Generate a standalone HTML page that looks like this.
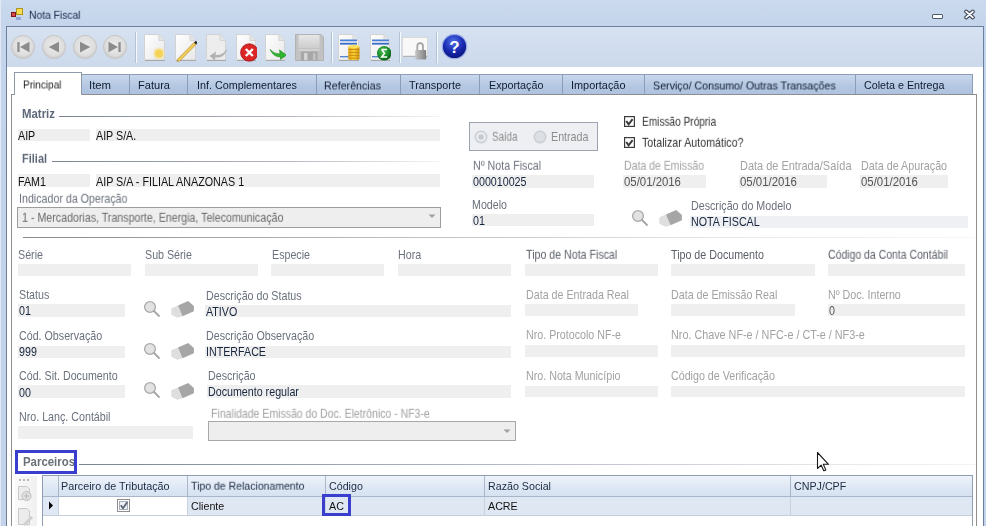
<!DOCTYPE html>
<html><head><meta charset="utf-8"><style>
html,body{margin:0;padding:0;}
body{width:986px;height:526px;overflow:hidden;position:relative;font-family:"Liberation Sans",sans-serif;}
.r{position:absolute;}
.t{position:absolute;white-space:nowrap;line-height:13px;will-change:transform;}
</style></head><body>
<div class="r" style="left:0px;top:0px;width:986.00px;height:526.00px;background:linear-gradient(#cbdaee,#c4d4ea 26px,#c2d3ea);"></div>
<div class="r" style="left:0px;top:0px;width:1.00px;height:526.00px;background:#e0e9f5;"></div>
<div class="r" style="left:16px;top:8px;width:7.00px;height:7.00px;background:#f6dc50;border:1px solid #b0951e;box-sizing:border-box;"></div>
<div class="r" style="left:11px;top:12px;width:5.00px;height:5.00px;background:#d94a4a;border:1px solid #7d1818;box-sizing:border-box;"></div>
<div class="r" style="left:16px;top:17px;width:5.00px;height:3.00px;background:#90a8d6;"></div>
<div class="t" style="left:29px;top:9.29px;font-size:10.7px;color:#15284b;transform-origin:0 10.21px;transform:scale(0.9642,1.02);">Nota Fiscal</div>
<div class="r" style="left:932px;top:14px;width:11.00px;height:5.00px;background:#fff;border:1px solid #4d5b70;border-radius:1px;box-sizing:border-box;"></div>
<svg class="r" style="left:963px;top:9px" width="13" height="11" viewBox="0 0 13 11"><path d="M3.2 2.6 L9.8 8.4 M9.8 2.6 L3.2 8.4" stroke="#3e4858" stroke-width="4" stroke-linecap="round"/><path d="M3.2 2.6 L9.8 8.4 M9.8 2.6 L3.2 8.4" stroke="#fff" stroke-width="1.9" stroke-linecap="round"/></svg>
<div class="r" style="left:6px;top:26px;width:978.00px;height:500.00px;background:#fff;border:1px solid #6c809e;border-bottom:none;box-sizing:border-box;"></div>
<div class="r" style="left:7px;top:27px;width:976.00px;height:40.00px;background:linear-gradient(#d6e2f1,#ccd9ec);"></div>
<svg class="r" style="left:9.7px;top:34px" width="26" height="26" viewBox="0 0 26 26"><defs><radialGradient id="g22" cx="50%" cy="45%" r="55%"><stop offset="0" stop-color="#ececec"/><stop offset="0.75" stop-color="#dedede"/><stop offset="1" stop-color="#c6c6c6"/></radialGradient></defs><circle cx="13" cy="13" r="11.6" fill="url(#g22)" stroke="#c8c8c8" stroke-width="1"/><rect x="7.3" y="8.2" width="2.3" height="9.8" fill="#8c8c8c"/><path d="M10 13 L19.5 7.8 L19.5 18.2Z" fill="#8c8c8c"/></svg>
<svg class="r" style="left:40.6px;top:34px" width="26" height="26" viewBox="0 0 26 26"><defs><radialGradient id="g53" cx="50%" cy="45%" r="55%"><stop offset="0" stop-color="#ececec"/><stop offset="0.75" stop-color="#dedede"/><stop offset="1" stop-color="#c6c6c6"/></radialGradient></defs><circle cx="13" cy="13" r="11.6" fill="url(#g53)" stroke="#c8c8c8" stroke-width="1"/><path d="M7.7 13 L18 7.7 L18 18.4Z" fill="#8c8c8c"/></svg>
<svg class="r" style="left:71.5px;top:34px" width="26" height="26" viewBox="0 0 26 26"><defs><radialGradient id="g84" cx="50%" cy="45%" r="55%"><stop offset="0" stop-color="#ececec"/><stop offset="0.75" stop-color="#dedede"/><stop offset="1" stop-color="#c6c6c6"/></radialGradient></defs><circle cx="13" cy="13" r="11.6" fill="url(#g84)" stroke="#c8c8c8" stroke-width="1"/><path d="M18.3 13 L8 7.7 L8 18.4Z" fill="#8c8c8c"/></svg>
<svg class="r" style="left:102.4px;top:34px" width="26" height="26" viewBox="0 0 26 26"><defs><radialGradient id="g115" cx="50%" cy="45%" r="55%"><stop offset="0" stop-color="#ececec"/><stop offset="0.75" stop-color="#dedede"/><stop offset="1" stop-color="#c6c6c6"/></radialGradient></defs><circle cx="13" cy="13" r="11.6" fill="url(#g115)" stroke="#c8c8c8" stroke-width="1"/><rect x="16.4" y="8.2" width="2.3" height="9.8" fill="#8c8c8c"/><path d="M16 13 L6.5 7.8 L6.5 18.2Z" fill="#8c8c8c"/></svg>
<div class="r" style="left:135px;top:32px;width:1.00px;height:31.00px;background:#b4c2d6;"></div>
<div class="r" style="left:136px;top:32px;width:1.00px;height:31.00px;background:#f6f9fd;"></div>
<div class="r" style="left:331px;top:32px;width:1.00px;height:31.00px;background:#b4c2d6;"></div>
<div class="r" style="left:332px;top:32px;width:1.00px;height:31.00px;background:#f6f9fd;"></div>
<div class="r" style="left:398.5px;top:32px;width:1.00px;height:31.00px;background:#b4c2d6;"></div>
<div class="r" style="left:399.5px;top:32px;width:1.00px;height:31.00px;background:#f6f9fd;"></div>
<div class="r" style="left:436px;top:32px;width:1.00px;height:31.00px;background:#b4c2d6;"></div>
<div class="r" style="left:437px;top:32px;width:1.00px;height:31.00px;background:#f6f9fd;"></div>
<svg class="r" style="left:144px;top:34px" width="22" height="28" viewBox="0 0 22 28"><defs><linearGradient id="pg" x1="0" y1="0" x2="1" y2="1"><stop offset="0" stop-color="#ffffff"/><stop offset="1" stop-color="#e8e8e8"/></linearGradient></defs><path d="M0.5 0.5 H15 L20.5 6.5 V26 H0.5Z" fill="url(#pg)" stroke="#d2d2d2"/><path d="M15 0.5 V6.5 H20.5" fill="#e4e4e4" stroke="#d4d4d4"/><path d="M1 26.5 H21" stroke="#a9a9a9"/><circle cx="15" cy="19.5" r="6" fill="#f8e08a" opacity="0.6"/><circle cx="15" cy="19.5" r="4" fill="#f4d458"/></svg>
<svg class="r" style="left:175px;top:34px" width="22" height="28" viewBox="0 0 22 28"><defs><linearGradient id="pg" x1="0" y1="0" x2="1" y2="1"><stop offset="0" stop-color="#ffffff"/><stop offset="1" stop-color="#e8e8e8"/></linearGradient></defs><path d="M0.5 0.5 H15 L20.5 6.5 V26 H0.5Z" fill="url(#pg)" stroke="#d2d2d2"/><path d="M15 0.5 V6.5 H20.5" fill="#e4e4e4" stroke="#d4d4d4"/><path d="M1 26.5 H21" stroke="#a9a9a9"/><path d="M2.8 25 L19 8.5 L21 10.5 L4.8 27 L2.3 27.5Z" fill="#f2cc5a" stroke="#b08420" stroke-width="0.6"/><path d="M19 8.5 L20.8 6.7 L22.8 8.7 L21 10.5Z" fill="#2a2a2a"/></svg>
<svg class="r" style="left:206px;top:34px" width="21" height="28" viewBox="0 0 21 28"><defs><linearGradient id="pg" x1="0" y1="0" x2="1" y2="1"><stop offset="0" stop-color="#ffffff"/><stop offset="1" stop-color="#e8e8e8"/></linearGradient></defs><path d="M0.5 0.5 H14 L19.5 6.5 V26 H0.5Z" fill="#ededed" stroke="#d2d2d2"/><path d="M14 0.5 V6.5 H19.5" fill="#e4e4e4" stroke="#d4d4d4"/><path d="M1 26.5 H20" stroke="#a9a9a9"/><path d="M20.5 15 Q17 21.5 9.5 21 L10 17.5 L3.5 22 L9 26.5 L9.3 23.5 Q18 24.5 21 16Z" fill="#b2b2b2"/></svg>
<svg class="r" style="left:235.5px;top:34px" width="21" height="28" viewBox="0 0 21 28"><defs><linearGradient id="pg" x1="0" y1="0" x2="1" y2="1"><stop offset="0" stop-color="#ffffff"/><stop offset="1" stop-color="#e8e8e8"/></linearGradient></defs><path d="M0.5 0.5 H14 L19.5 6.5 V26 H0.5Z" fill="url(#pg)" stroke="#d2d2d2"/><path d="M14 0.5 V6.5 H19.5" fill="#e4e4e4" stroke="#d4d4d4"/><path d="M1 26.5 H20" stroke="#a9a9a9"/><circle cx="13.3" cy="18.5" r="8.7" fill="#dc2626" stroke="#a01414" stroke-width="0.8"/><path d="M9.8 15 L16.8 22 M16.8 15 L9.8 22" stroke="#fff" stroke-width="2.4"/></svg>
<svg class="r" style="left:265px;top:34px" width="21" height="28" viewBox="0 0 21 28"><defs><linearGradient id="pg" x1="0" y1="0" x2="1" y2="1"><stop offset="0" stop-color="#ffffff"/><stop offset="1" stop-color="#e8e8e8"/></linearGradient></defs><path d="M0.5 0.5 H14 L19.5 6.5 V26 H0.5Z" fill="url(#pg)" stroke="#d2d2d2"/><path d="M14 0.5 V6.5 H19.5" fill="#e4e4e4" stroke="#d4d4d4"/><path d="M1 26.5 H20" stroke="#a9a9a9"/><path d="M5 15.5 Q9 20 15 20 L14.5 16 L21.5 21 L15.5 25.5 L15.5 23 Q8.5 23 5 15.5Z" fill="#2fb52f" stroke="#1c8a1c" stroke-width="0.6"/></svg>
<svg class="r" style="left:295px;top:33.5px" width="29" height="27" viewBox="0 0 29 27"><defs><linearGradient id="fl" x1="0" y1="0" x2="0" y2="1"><stop offset="0" stop-color="#e6e6e6"/><stop offset="1" stop-color="#cdcdcd"/></linearGradient></defs><path d="M0.5 0.5 H26 L28.5 3 V26.5 H0.5Z" fill="#c2c2c2" stroke="#b2b2b2"/><rect x="3.5" y="1" width="21" height="13" fill="url(#fl)"/><rect x="3.5" y="15.5" width="21" height="1" fill="#e0e0e0"/><rect x="6" y="17.5" width="16.5" height="9" fill="#a6a6a6"/><rect x="9" y="19" width="3.5" height="7" fill="#d4d4d4"/><rect x="18" y="19" width="2.5" height="7" fill="#c4c4c4"/></svg>
<svg class="r" style="left:338px;top:34px" width="22" height="28" viewBox="0 0 22 28"><defs><linearGradient id="pg" x1="0" y1="0" x2="1" y2="1"><stop offset="0" stop-color="#ffffff"/><stop offset="1" stop-color="#e8e8e8"/></linearGradient></defs><path d="M0.5 0.5 H15 L20.5 6.5 V26 H0.5Z" fill="url(#pg)" stroke="#d2d2d2"/><path d="M15 0.5 V6.5 H20.5" fill="#e4e4e4" stroke="#d4d4d4"/><path d="M1 26.5 H21" stroke="#a9a9a9"/><defs><linearGradient id="cn" x1="0" y1="0" x2="1" y2="0"><stop offset="0" stop-color="#e0a010"/><stop offset="0.5" stop-color="#f8d030"/><stop offset="1" stop-color="#d09010"/></linearGradient></defs><rect x="2" y="5.5" width="17" height="1.8" fill="#4a80d8"/><rect x="2" y="8.8" width="17" height="1.8" fill="#3a6ac8"/><rect x="2" y="22" width="9" height="1.4" fill="#5a88d0"/><rect x="10.3" y="12" width="11.2" height="14" rx="2" fill="url(#cn)"/><path d="M10.5 15.5 H21.3 M10.5 18.5 H21.3 M10.5 21.5 H21.3 M10.5 24.2 H21.3" stroke="#c08010" stroke-width="0.7"/><ellipse cx="15.9" cy="12.5" rx="5.6" ry="1.8" fill="#fae060"/></svg>
<svg class="r" style="left:369.9px;top:34px" width="21" height="28" viewBox="0 0 21 28"><defs><linearGradient id="pg" x1="0" y1="0" x2="1" y2="1"><stop offset="0" stop-color="#ffffff"/><stop offset="1" stop-color="#e8e8e8"/></linearGradient></defs><path d="M0.5 0.5 H14 L19.5 6.5 V26 H0.5Z" fill="url(#pg)" stroke="#d2d2d2"/><path d="M14 0.5 V6.5 H19.5" fill="#e4e4e4" stroke="#d4d4d4"/><path d="M1 26.5 H20" stroke="#a9a9a9"/><defs><radialGradient id="sg" cx="40%" cy="35%" r="70%"><stop offset="0" stop-color="#50c050"/><stop offset="0.6" stop-color="#1a8a2a"/><stop offset="1" stop-color="#0a5a18"/></radialGradient></defs><rect x="2" y="5.5" width="17" height="1.8" fill="#4a80d8"/><rect x="2" y="8.8" width="17" height="1.8" fill="#3a6ac8"/><rect x="2" y="22" width="9" height="1.4" fill="#5a88d0"/><circle cx="14.2" cy="19.3" r="7.2" fill="url(#sg)"/><path d="M11.6 15.5 H17 M11.6 15.5 L14.6 19.3 L11.6 23.1 H17.2" fill="none" stroke="#fff" stroke-width="1.5"/></svg>
<svg class="r" style="left:402px;top:37px" width="27" height="24" viewBox="0 0 27 24"><defs><linearGradient id="lk" x1="0" y1="0" x2="1" y2="0"><stop offset="0" stop-color="#c4c4c4"/><stop offset="1" stop-color="#808080"/></linearGradient></defs><rect x="0.5" y="0.5" width="25" height="18.5" fill="#f8f8f8" stroke="#dadada"/><path d="M1 19.5 H25.5" stroke="#b4b4b4"/><path d="M15.3 13.5 V9.3 Q15.3 6.2 18.2 6.2 Q21 6.2 21 9.3 V13.5" fill="none" stroke="#a2a2a2" stroke-width="1.7"/><rect x="13.2" y="13" width="11" height="9.6" rx="1" fill="url(#lk)"/></svg>
<svg class="r" style="left:441px;top:33px" width="27" height="27" viewBox="0 0 27 27"><defs><radialGradient id="hg" cx="45%" cy="30%" r="70%"><stop offset="0" stop-color="#5070e8"/><stop offset="0.6" stop-color="#1828b0"/><stop offset="1" stop-color="#0a1478"/></radialGradient></defs><circle cx="13.5" cy="13.5" r="12.2" fill="url(#hg)" stroke="#9cb0e8" stroke-width="1.2"/><text x="13.5" y="19.5" font-size="17" font-weight="bold" fill="#fff" text-anchor="middle" font-family="Liberation Sans">?</text></svg>
<div class="r" style="left:82px;top:74px;width:48.00px;height:21.00px;background:linear-gradient(#c9d8ec,#b3c7e1 60%,#aec3df);border:1px solid #8b9db8;border-left:none;box-sizing:border-box;"></div>
<div class="t" style="left:88.6px;top:79.29px;font-size:10.7px;color:#101c30;transform-origin:0 10.21px;transform:scale(1.0573,1.05);">Item</div>
<div class="r" style="left:130px;top:74px;width:58.00px;height:21.00px;background:linear-gradient(#c9d8ec,#b3c7e1 60%,#aec3df);border:1px solid #8b9db8;border-left:none;box-sizing:border-box;"></div>
<div class="t" style="left:137.5px;top:79.29px;font-size:10.7px;color:#101c30;transform-origin:0 10.21px;transform:scale(1.0349,1.05);">Fatura</div>
<div class="r" style="left:188px;top:74px;width:129.00px;height:21.00px;background:linear-gradient(#c9d8ec,#b3c7e1 60%,#aec3df);border:1px solid #8b9db8;border-left:none;box-sizing:border-box;"></div>
<div class="t" style="left:196.9px;top:79.29px;font-size:10.7px;color:#101c30;transform-origin:0 10.21px;transform:scale(1.0070,1.05);">Inf. Complementares</div>
<div class="r" style="left:317px;top:74px;width:84.00px;height:21.00px;background:linear-gradient(#c9d8ec,#b3c7e1 60%,#aec3df);border:1px solid #8b9db8;border-left:none;box-sizing:border-box;"></div>
<div class="t" style="left:324.4px;top:79.29px;font-size:10.7px;color:#101c30;transform-origin:0 10.21px;transform:scale(0.9984,1.05);">Referências</div>
<div class="r" style="left:401px;top:74px;width:79.00px;height:21.00px;background:linear-gradient(#c9d8ec,#b3c7e1 60%,#aec3df);border:1px solid #8b9db8;border-left:none;box-sizing:border-box;"></div>
<div class="t" style="left:408.8px;top:79.29px;font-size:10.7px;color:#101c30;transform-origin:0 10.21px;transform:scale(1.0129,1.05);">Transporte</div>
<div class="r" style="left:480px;top:74px;width:83.00px;height:21.00px;background:linear-gradient(#c9d8ec,#b3c7e1 60%,#aec3df);border:1px solid #8b9db8;border-left:none;box-sizing:border-box;"></div>
<div class="t" style="left:488.5px;top:79.29px;font-size:10.7px;color:#101c30;transform-origin:0 10.21px;transform:scale(1.0070,1.05);">Exportação</div>
<div class="r" style="left:563px;top:74px;width:82.00px;height:21.00px;background:linear-gradient(#c9d8ec,#b3c7e1 60%,#aec3df);border:1px solid #8b9db8;border-left:none;box-sizing:border-box;"></div>
<div class="t" style="left:570.6px;top:79.29px;font-size:10.7px;color:#101c30;transform-origin:0 10.21px;transform:scale(1.0183,1.05);">Importação</div>
<div class="r" style="left:645px;top:74px;width:211.00px;height:21.00px;background:linear-gradient(#c9d8ec,#b3c7e1 60%,#aec3df);border:1px solid #8b9db8;border-left:none;box-sizing:border-box;"></div>
<div class="t" style="left:652.7px;top:79.29px;font-size:10.7px;color:#101c30;transform-origin:0 10.21px;transform:scale(0.9959,1.05);">Serviço/ Consumo/ Outras Transações</div>
<div class="r" style="left:856px;top:74px;width:117.00px;height:21.00px;background:linear-gradient(#c9d8ec,#b3c7e1 60%,#aec3df);border:1px solid #8b9db8;border-left:none;box-sizing:border-box;"></div>
<div class="t" style="left:863.7px;top:79.29px;font-size:10.7px;color:#101c30;transform-origin:0 10.21px;transform:scale(1.0025,1.05);">Coleta e Entrega</div>
<div class="r" style="left:81px;top:74px;width:1.00px;height:21.00px;background:#8b9db8;"></div>
<div class="r" style="left:11px;top:94px;width:966.00px;height:432.00px;background:#fff;border:1px solid #8e8e8e;border-bottom:none;box-sizing:border-box;"></div>
<div class="r" style="left:14px;top:72px;width:68.00px;height:23.00px;background:#fff;border:1px solid #8e9aaa;border-bottom:none;box-sizing:border-box;"></div>
<div class="t" style="left:22.5px;top:78.09px;font-size:10.7px;color:#1a1a1a;transform-origin:0 10.21px;transform:scale(0.9383,1.05);">Principal</div>
<div class="t" style="left:22px;top:108.19px;font-size:11px;color:#5d6878;font-weight:bold;transform-origin:0 10.31px;transform:scale(1.0384,1.12);">Matriz</div>
<div class="r" style="left:59px;top:116px;width:381.00px;height:1.00px;background:linear-gradient(90deg,#7c8494,#b4b8c0 60%,#f4f4f4);"></div>
<div class="r" style="left:18px;top:129px;width:72.00px;height:12.00px;background:#efefef;"></div>
<div class="t" style="left:18px;top:130.29px;font-size:10.7px;color:#111;transform-origin:0 10.21px;transform:scale(1.0000,1.12);">AIP</div>
<div class="r" style="left:96px;top:129px;width:344.00px;height:12.00px;background:#efefef;"></div>
<div class="t" style="left:96px;top:130.29px;font-size:10.7px;color:#111;transform-origin:0 10.21px;transform:scale(1.0000,1.12);">AIP S/A.</div>
<div class="t" style="left:22px;top:152.69px;font-size:11px;color:#5d6878;font-weight:bold;transform-origin:0 10.31px;transform:scale(0.9976,1.12);">Filial</div>
<div class="r" style="left:51.5px;top:161px;width:388.50px;height:1.00px;background:linear-gradient(90deg,#7c8494,#b4b8c0 60%,#f4f4f4);"></div>
<div class="r" style="left:18px;top:174px;width:72.00px;height:12.50px;background:#efefef;"></div>
<div class="t" style="left:18px;top:175.79px;font-size:10.7px;color:#111;transform-origin:0 10.21px;transform:scale(1.0000,1.12);">FAM1</div>
<div class="r" style="left:96px;top:174px;width:344.00px;height:12.50px;background:#efefef;"></div>
<div class="t" style="left:96px;top:175.79px;font-size:10.7px;color:#111;transform-origin:0 10.21px;transform:scale(1.0056,1.12);">AIP S/A - FILIAL ANAZONAS 1</div>
<div class="t" style="left:18.5px;top:193.29px;font-size:10.7px;color:#6b717c;transform-origin:0 10.21px;transform:scale(0.9968,1.12);">Indicador da Operação</div>
<div class="r" style="left:17px;top:207px;width:423.50px;height:20.50px;background:#eeeeee;border:1px solid #9c9c9c;box-sizing:border-box;"></div>
<div class="t" style="left:22px;top:211.99px;font-size:10.7px;color:#6a6a6a;transform-origin:0 10.21px;transform:scale(0.9964,1.12);">1 - Mercadorias, Transporte, Energia, Telecomunicação</div>
<svg class="r" style="left:428px;top:214px" width="9" height="5" viewBox="0 0 9 5"><path d="M0.5 0.5 H7.5 L4 4Z" fill="#a0a0a0"/></svg>
<div class="r" style="left:469px;top:122px;width:129.00px;height:29.00px;background:#eeeff2;border:1px solid #9ca4b2;box-sizing:border-box;"></div>
<svg class="r" style="left:474px;top:129.5px" width="14" height="14" viewBox="0 0 14 14"><circle cx="7" cy="7" r="5.8" fill="#e8eaee" stroke="#c9ced6" stroke-width="1.4"/><circle cx="7" cy="7" r="2.6" fill="#c4cad2"/></svg>
<div class="t" style="left:491.5px;top:131.29px;font-size:10.7px;color:#8c8c8c;transform-origin:0 10.21px;transform:scale(0.9120,1.12);">Saída</div>
<svg class="r" style="left:533px;top:129.5px" width="14" height="14" viewBox="0 0 14 14"><circle cx="7" cy="7" r="5.8" fill="#dcdfe3" stroke="#c9ced6" stroke-width="1.4"/></svg>
<div class="t" style="left:550.5px;top:131.29px;font-size:10.7px;color:#8c8c8c;transform-origin:0 10.21px;transform:scale(1.0007,1.12);">Entrada</div>
<div class="t" style="left:472.5px;top:160.29px;font-size:10.7px;color:#6b717c;transform-origin:0 10.21px;transform:scale(0.9982,1.12);">Nº Nota Fiscal</div>
<div class="r" style="left:471.5px;top:175px;width:122.50px;height:12.50px;background:#efefef;"></div>
<div class="t" style="left:472.5px;top:176.29px;font-size:10.7px;color:#17253d;transform-origin:0 10.21px;transform:scale(1.0000,1.12);">000010025</div>
<div class="t" style="left:472px;top:199.29px;font-size:10.7px;color:#6b717c;transform-origin:0 10.21px;transform:scale(1.0000,1.12);">Modelo</div>
<div class="r" style="left:471.5px;top:214.3px;width:122.50px;height:12.20px;background:#efefef;"></div>
<div class="t" style="left:472.5px;top:215.29px;font-size:10.7px;color:#17253d;transform-origin:0 10.21px;transform:scale(1.0000,1.12);">01</div>
<svg class="r" style="left:624px;top:116px" width="11" height="11" viewBox="0 0 11 11"><rect x="0.6" y="0.6" width="9.8" height="9.8" fill="#fff" stroke="#3c3c3c" stroke-width="1.2"/><path d="M2.3 5 L4.6 8.3 L8.6 3.2" fill="none" stroke="#3a3a3a" stroke-width="2"/></svg>
<div class="t" style="left:641.8px;top:116.29px;font-size:10.7px;color:#333;transform-origin:0 10.21px;transform:scale(0.9453,1.12);">Emissão Própria</div>
<svg class="r" style="left:624px;top:137px" width="11" height="11" viewBox="0 0 11 11"><rect x="0.6" y="0.6" width="9.8" height="9.8" fill="#fff" stroke="#3c3c3c" stroke-width="1.2"/><path d="M2.3 5 L4.6 8.3 L8.6 3.2" fill="none" stroke="#3a3a3a" stroke-width="2"/></svg>
<div class="t" style="left:641.8px;top:137.29px;font-size:10.7px;color:#333;transform-origin:0 10.21px;transform:scale(0.9981,1.12);">Totalizar Automático?</div>
<div class="t" style="left:623.5px;top:160.49px;font-size:10.7px;color:#a2a2a2;transform-origin:0 10.21px;transform:scale(0.9819,1.12);">Data de Emissão</div>
<div class="r" style="left:623px;top:175px;width:83.00px;height:12.50px;background:#efefef;"></div>
<div class="t" style="left:623.5px;top:176.29px;font-size:10.7px;color:#555;transform-origin:0 10.21px;transform:scale(1.0645,1.12);">05/01/2016</div>
<div class="t" style="left:739.6px;top:160.49px;font-size:10.7px;color:#a2a2a2;transform-origin:0 10.21px;transform:scale(1.0252,1.12);">Data de Entrada/Saída</div>
<div class="r" style="left:739px;top:175px;width:88.00px;height:12.50px;background:#efefef;"></div>
<div class="t" style="left:739.6px;top:176.29px;font-size:10.7px;color:#555;transform-origin:0 10.21px;transform:scale(1.0645,1.12);">05/01/2016</div>
<div class="t" style="left:860.6px;top:160.49px;font-size:10.7px;color:#a2a2a2;transform-origin:0 10.21px;transform:scale(1.0063,1.12);">Data de Apuração</div>
<div class="r" style="left:860px;top:175px;width:87.50px;height:12.50px;background:#efefef;"></div>
<div class="t" style="left:860.6px;top:176.29px;font-size:10.7px;color:#555;transform-origin:0 10.21px;transform:scale(1.0645,1.12);">05/01/2016</div>
<svg class="r" style="left:629.8px;top:207.8px" width="20" height="20" viewBox="0 0 20 20"><circle cx="8" cy="8" r="5.4" fill="#e2e2e2" stroke="#aaaaaa" stroke-width="1.3"/><path d="M12 12 L17 17" stroke="#a4a4a4" stroke-width="1.8" stroke-linecap="round"/></svg>
<svg class="r" style="left:655.0px;top:206.0px" width="30" height="24" viewBox="0 0 30 24"><path d="M4.3 11.2 L11 8.4 L15.5 19.2 L10.5 20.8 L4.3 17.8Z" fill="#dedede"/><path d="M11 8.4 L21.2 4.1 L26.9 9.1 L26.9 14.2 L15.5 19.2Z" fill="#a6a6a6"/></svg>
<div class="t" style="left:691px;top:199.99px;font-size:10.7px;color:#6b717c;transform-origin:0 10.21px;transform:scale(1.0000,1.12);">Descrição do Modelo</div>
<div class="r" style="left:690px;top:215.5px;width:277.50px;height:12.00px;background:#eef0f4;"></div>
<div class="t" style="left:691px;top:215.69px;font-size:10.7px;color:#17253d;transform-origin:0 10.21px;transform:scale(1.0000,1.12);">NOTA FISCAL</div>
<div class="r" style="left:23px;top:237px;width:953.00px;height:1.00px;background:linear-gradient(90deg,#8a8a8a,#b8b8b8 35%,#e8e8e8 75%,#f8f8f8);"></div>
<div class="t" style="left:18px;top:249.29px;font-size:10.7px;color:#6b717c;transform-origin:0 10.21px;transform:scale(1.0000,1.12);">Série</div>
<div class="r" style="left:17.5px;top:264.2px;width:113.50px;height:11.60px;background:#efefef;"></div>
<div class="t" style="left:145px;top:249.29px;font-size:10.7px;color:#6b717c;transform-origin:0 10.21px;transform:scale(1.0000,1.12);">Sub Série</div>
<div class="r" style="left:144.5px;top:264.2px;width:113.50px;height:11.60px;background:#efefef;"></div>
<div class="t" style="left:272px;top:249.29px;font-size:10.7px;color:#6b717c;transform-origin:0 10.21px;transform:scale(1.0000,1.12);">Especie</div>
<div class="r" style="left:271px;top:264.2px;width:113.30px;height:11.60px;background:#efefef;"></div>
<div class="t" style="left:398.3px;top:249.29px;font-size:10.7px;color:#6b717c;transform-origin:0 10.21px;transform:scale(1.0000,1.12);">Hora</div>
<div class="r" style="left:398px;top:264.2px;width:113.30px;height:11.60px;background:#efefef;"></div>
<div class="t" style="left:525.5px;top:249.29px;font-size:10.7px;color:#5a5f66;transform-origin:0 10.21px;transform:scale(0.9948,1.12);">Tipo de Nota Fiscal</div>
<div class="r" style="left:525px;top:264.2px;width:133.30px;height:11.60px;background:#efefef;"></div>
<div class="t" style="left:671.2px;top:249.29px;font-size:10.7px;color:#5a5f66;transform-origin:0 10.21px;transform:scale(1.0000,1.12);">Tipo de Documento</div>
<div class="r" style="left:671px;top:264.2px;width:143.60px;height:11.60px;background:#efefef;"></div>
<div class="t" style="left:828px;top:249.29px;font-size:10.7px;color:#5a5f66;transform-origin:0 10.21px;transform:scale(0.9794,1.12);">Código da Conta Contábil</div>
<div class="r" style="left:828px;top:264.2px;width:137.00px;height:11.60px;background:#efefef;"></div>
<div class="t" style="left:18.5px;top:288.79px;font-size:10.7px;color:#6b717c;transform-origin:0 10.21px;transform:scale(1.0000,1.12);">Status</div>
<div class="r" style="left:17.5px;top:304px;width:107.50px;height:12.50px;background:#efefef;"></div>
<div class="t" style="left:18.5px;top:305.29px;font-size:10.7px;color:#17253d;transform-origin:0 10.21px;transform:scale(1.0000,1.12);">01</div>
<svg class="r" style="left:142px;top:298.9px" width="20" height="20" viewBox="0 0 20 20"><circle cx="8" cy="8" r="5.4" fill="#e2e2e2" stroke="#aaaaaa" stroke-width="1.3"/><path d="M12 12 L17 17" stroke="#a4a4a4" stroke-width="1.8" stroke-linecap="round"/></svg>
<svg class="r" style="left:167.2px;top:297.1px" width="30" height="24" viewBox="0 0 30 24"><path d="M4.3 11.2 L11 8.4 L15.5 19.2 L10.5 20.8 L4.3 17.8Z" fill="#dedede"/><path d="M11 8.4 L21.2 4.1 L26.9 9.1 L26.9 14.2 L15.5 19.2Z" fill="#a6a6a6"/></svg>
<div class="t" style="left:206px;top:289.79px;font-size:10.7px;color:#6b717c;transform-origin:0 10.21px;transform:scale(1.0000,1.12);">Descrição do Status</div>
<div class="r" style="left:205px;top:305px;width:306.30px;height:12.00px;background:#efefef;"></div>
<div class="t" style="left:206px;top:305.79px;font-size:10.7px;color:#17253d;transform-origin:0 10.21px;transform:scale(1.0000,1.12);">ATIVO</div>
<div class="t" style="left:525.5px;top:288.79px;font-size:10.7px;color:#a2a2a2;transform-origin:0 10.21px;transform:scale(1.0000,1.12);">Data de Entrada Real</div>
<div class="r" style="left:525px;top:303.5px;width:113.30px;height:12.90px;background:#efefef;"></div>
<div class="t" style="left:671px;top:288.79px;font-size:10.7px;color:#a2a2a2;transform-origin:0 10.21px;transform:scale(1.0000,1.12);">Data de Emissão Real</div>
<div class="r" style="left:671px;top:303.5px;width:123.50px;height:12.90px;background:#efefef;"></div>
<div class="t" style="left:828px;top:288.79px;font-size:10.7px;color:#a2a2a2;transform-origin:0 10.21px;transform:scale(1.0000,1.12);">Nº Doc. Interno</div>
<div class="r" style="left:828px;top:303.5px;width:137.00px;height:12.90px;background:#efefef;"></div>
<div class="t" style="left:829px;top:305.19px;font-size:10.7px;color:#555;transform-origin:0 10.21px;transform:scale(1.0000,1.12);">0</div>
<div class="t" style="left:18.5px;top:329.69px;font-size:10.7px;color:#6b717c;transform-origin:0 10.21px;transform:scale(1.0000,1.12);">Cód. Observação</div>
<div class="r" style="left:17.5px;top:345.6px;width:107.50px;height:12.10px;background:#efefef;"></div>
<div class="t" style="left:18.5px;top:346.49px;font-size:10.7px;color:#17253d;transform-origin:0 10.21px;transform:scale(1.0000,1.12);">999</div>
<svg class="r" style="left:142px;top:340.5px" width="20" height="20" viewBox="0 0 20 20"><circle cx="8" cy="8" r="5.4" fill="#e2e2e2" stroke="#aaaaaa" stroke-width="1.3"/><path d="M12 12 L17 17" stroke="#a4a4a4" stroke-width="1.8" stroke-linecap="round"/></svg>
<svg class="r" style="left:167.2px;top:338.7px" width="30" height="24" viewBox="0 0 30 24"><path d="M4.3 11.2 L11 8.4 L15.5 19.2 L10.5 20.8 L4.3 17.8Z" fill="#dedede"/><path d="M11 8.4 L21.2 4.1 L26.9 9.1 L26.9 14.2 L15.5 19.2Z" fill="#a6a6a6"/></svg>
<div class="t" style="left:206px;top:329.69px;font-size:10.7px;color:#6b717c;transform-origin:0 10.21px;transform:scale(1.0000,1.12);">Descrição Observação</div>
<div class="r" style="left:205px;top:345.6px;width:306.30px;height:12.10px;background:#efefef;"></div>
<div class="t" style="left:206px;top:346.49px;font-size:10.7px;color:#17253d;transform-origin:0 10.21px;transform:scale(1.0000,1.12);">INTERFACE</div>
<div class="t" style="left:525.5px;top:328.79px;font-size:10.7px;color:#a2a2a2;transform-origin:0 10.21px;transform:scale(1.0000,1.12);">Nro. Protocolo NF-e</div>
<div class="r" style="left:525px;top:344.8px;width:133.30px;height:12.00px;background:#efefef;"></div>
<div class="t" style="left:671px;top:328.79px;font-size:10.7px;color:#a2a2a2;transform-origin:0 10.21px;transform:scale(1.0103,1.12);">Nro. Chave NF-e / NFC-e / CT-e / NF3-e</div>
<div class="r" style="left:671px;top:344.8px;width:294.00px;height:12.00px;background:#efefef;"></div>
<div class="t" style="left:18.5px;top:370.29px;font-size:10.7px;color:#6b717c;transform-origin:0 10.21px;transform:scale(1.0000,1.12);">Cód. Sit. Documento</div>
<div class="r" style="left:17.5px;top:385.4px;width:107.50px;height:12.40px;background:#efefef;"></div>
<div class="t" style="left:18.5px;top:386.59px;font-size:10.7px;color:#17253d;transform-origin:0 10.21px;transform:scale(1.0000,1.12);">00</div>
<svg class="r" style="left:142px;top:380.3px" width="20" height="20" viewBox="0 0 20 20"><circle cx="8" cy="8" r="5.4" fill="#e2e2e2" stroke="#aaaaaa" stroke-width="1.3"/><path d="M12 12 L17 17" stroke="#a4a4a4" stroke-width="1.8" stroke-linecap="round"/></svg>
<svg class="r" style="left:167.2px;top:378.5px" width="30" height="24" viewBox="0 0 30 24"><path d="M4.3 11.2 L11 8.4 L15.5 19.2 L10.5 20.8 L4.3 17.8Z" fill="#dedede"/><path d="M11 8.4 L21.2 4.1 L26.9 9.1 L26.9 14.2 L15.5 19.2Z" fill="#a6a6a6"/></svg>
<div class="t" style="left:208px;top:370.29px;font-size:10.7px;color:#6b717c;transform-origin:0 10.21px;transform:scale(1.0000,1.12);">Descrição</div>
<div class="r" style="left:207px;top:385.4px;width:304.30px;height:12.40px;background:#efefef;"></div>
<div class="t" style="left:208px;top:385.69px;font-size:10.7px;color:#17253d;transform-origin:0 10.21px;transform:scale(1.0000,1.12);">Documento regular</div>
<div class="t" style="left:525.5px;top:370.29px;font-size:10.7px;color:#a2a2a2;transform-origin:0 10.21px;transform:scale(1.0000,1.12);">Nro. Nota Município</div>
<div class="r" style="left:525px;top:385.5px;width:133.30px;height:11.90px;background:#efefef;"></div>
<div class="t" style="left:671px;top:370.29px;font-size:10.7px;color:#a2a2a2;transform-origin:0 10.21px;transform:scale(1.0000,1.12);">Código de Verificação</div>
<div class="r" style="left:671px;top:385.5px;width:294.00px;height:11.90px;background:#efefef;"></div>
<div class="t" style="left:18.5px;top:411.29px;font-size:10.7px;color:#6b717c;transform-origin:0 10.21px;transform:scale(1.0000,1.12);">Nro. Lanç. Contábil</div>
<div class="r" style="left:17.5px;top:426.3px;width:175.50px;height:12.40px;background:#efefef;"></div>
<div class="t" style="left:210.7px;top:408.29px;font-size:10.7px;color:#a2a2a2;transform-origin:0 10.21px;transform:scale(0.9821,1.12);">Finalidade Emissão do Doc. Eletrônico - NF3-e</div>
<div class="r" style="left:208px;top:421.4px;width:308.00px;height:20.00px;background:#eeeeee;border:1px solid #a8a8a8;box-sizing:border-box;"></div>
<svg class="r" style="left:503px;top:429px" width="9" height="5" viewBox="0 0 9 5"><path d="M0.5 0.5 H7.5 L4 4Z" fill="#a0a0a0"/></svg>
<div class="t" style="left:22.5px;top:455.99px;font-size:11px;color:#6a7078;font-weight:bold;transform-origin:0 10.31px;transform:scale(1.0370,1.12);">Parceiros</div>
<div class="r" style="left:79px;top:464px;width:897.00px;height:1.00px;background:linear-gradient(90deg,#7c8494,#b0b6c0 45%,#e6e8ec 85%,#f4f4f4);"></div>
<div class="r" style="left:15px;top:476px;width:22.00px;height:50.00px;background:linear-gradient(90deg,#fafafa,#f0f0f0);"></div>
<div class="r" style="left:19px;top:478.5px;width:2.00px;height:2.00px;background:#b8b8b8;"></div>
<div class="r" style="left:23px;top:478.5px;width:2.00px;height:2.00px;background:#b8b8b8;"></div>
<div class="r" style="left:27px;top:478.5px;width:2.00px;height:2.00px;background:#b8b8b8;"></div>
<svg class="r" style="left:17px;top:485px" width="16" height="18" viewBox="0 0 16 18"><path d="M1.5 1.5 H10 L12.5 4 V14.5 H1.5Z" fill="#ececec" stroke="#c8c8c8"/><circle cx="9.5" cy="11" r="4.5" fill="#e0e0e0" stroke="#c0c0c0"/><path d="M9.5 8.5 V13.5 M7 11 H12" stroke="#bcbcbc" stroke-width="1.2"/></svg>
<svg class="r" style="left:17px;top:507px" width="16" height="19" viewBox="0 0 16 19"><path d="M1.5 1.5 H10 L12.5 4 V17.5 H1.5Z" fill="#ececec" stroke="#c8c8c8"/><path d="M6 17 L14 9 L16 11 L8 19Z" fill="#d0d0d0"/></svg>
<div class="r" style="left:42px;top:475px;width:931.00px;height:51.00px;background:#fff;border:1px solid #8f9db2;border-bottom:none;box-sizing:border-box;"></div>
<div class="r" style="left:43px;top:476px;width:929.00px;height:20.00px;background:linear-gradient(#eef3fa,#e0e9f5 50%,#d6e2f1);"></div>
<div class="r" style="left:43px;top:496px;width:929.00px;height:1.00px;background:#a7b6cb;"></div>
<div class="r" style="left:43px;top:497px;width:15.00px;height:18.00px;background:#dfe8f4;"></div>
<div class="r" style="left:58px;top:497px;width:129.50px;height:18.00px;background:#fff;"></div>
<div class="r" style="left:187.5px;top:497px;width:784.50px;height:18.00px;background:#dfe7f3;"></div>
<div class="r" style="left:43px;top:515px;width:929.00px;height:1.00px;background:#c5cfdc;"></div>
<div class="r" style="left:57.5px;top:476px;width:1.00px;height:20.00px;background:#a9b7ca;"></div>
<div class="r" style="left:57.5px;top:497px;width:1.00px;height:18.00px;background:#c9d3e0;"></div>
<div class="r" style="left:187px;top:476px;width:1.00px;height:20.00px;background:#a9b7ca;"></div>
<div class="r" style="left:187px;top:497px;width:1.00px;height:18.00px;background:#c9d3e0;"></div>
<div class="r" style="left:324.7px;top:476px;width:1.00px;height:20.00px;background:#a9b7ca;"></div>
<div class="r" style="left:324.7px;top:497px;width:1.00px;height:18.00px;background:#c9d3e0;"></div>
<div class="r" style="left:484px;top:476px;width:1.00px;height:20.00px;background:#a9b7ca;"></div>
<div class="r" style="left:484px;top:497px;width:1.00px;height:18.00px;background:#c9d3e0;"></div>
<div class="r" style="left:790px;top:476px;width:1.00px;height:20.00px;background:#a9b7ca;"></div>
<div class="r" style="left:790px;top:497px;width:1.00px;height:18.00px;background:#c9d3e0;"></div>
<svg class="r" style="left:48px;top:501px" width="6" height="9" viewBox="0 0 6 9"><path d="M1 0.5 L5 4.5 L1 8.5Z" fill="#000"/></svg>
<div class="t" style="left:61.1px;top:480.29px;font-size:10.7px;color:#1d2a44;transform-origin:0 10.21px;transform:scale(1.0098,1.03);">Parceiro de Tributação</div>
<div class="t" style="left:190.9px;top:480.29px;font-size:10.7px;color:#1d2a44;transform-origin:0 10.21px;transform:scale(0.9829,1.03);">Tipo de Relacionamento</div>
<div class="t" style="left:329px;top:480.29px;font-size:10.7px;color:#1d2a44;transform-origin:0 10.21px;transform:scale(1.0000,1.03);">Código</div>
<div class="t" style="left:487.5px;top:480.29px;font-size:10.7px;color:#1d2a44;transform-origin:0 10.21px;transform:scale(1.0000,1.03);">Razão Social</div>
<div class="t" style="left:793.5px;top:480.29px;font-size:10.7px;color:#1d2a44;transform-origin:0 10.21px;transform:scale(1.0000,1.03);">CNPJ/CPF</div>
<svg class="r" style="left:117px;top:499px" width="13" height="13" viewBox="0 0 13 13"><rect x="0.5" y="0.5" width="12" height="12" fill="#fff" stroke="#8e8e8e"/><rect x="2.5" y="2.5" width="8" height="8" fill="#eef1f6" stroke="#a8aeb8"/><path d="M3.8 6.3 L6 9.3 L10.2 3.2" fill="none" stroke="#5a6474" stroke-width="1.8"/></svg>
<div class="t" style="left:191px;top:500.29px;font-size:10.7px;color:#111;transform-origin:0 10.21px;transform:scale(1.0000,1.03);">Cliente</div>
<div class="t" style="left:329px;top:500.29px;font-size:10.7px;color:#111;transform-origin:0 10.21px;transform:scale(1.0000,1.03);">AC</div>
<div class="t" style="left:488px;top:500.29px;font-size:10.7px;color:#111;transform-origin:0 10.21px;transform:scale(1.0000,1.03);">ACRE</div>
<div class="r" style="left:14.5px;top:450px;width:62.50px;height:23.50px;border:3px solid #3a3ecf;box-sizing:border-box;"></div>
<div class="r" style="left:322.2px;top:494.1px;width:29.10px;height:21.50px;border:3px solid #3a3ecf;box-sizing:border-box;"></div>
<svg class="r" style="left:816px;top:451px" width="16" height="22" viewBox="0 0 16 22"><path d="M1.5 1.5 L1.5 17.5 L5.1 14.1 L7.8 19.8 L9.8 18.9 L7.3 13.3 L12.5 13.3Z" fill="#fff" stroke="#1a1a1a" stroke-width="1.1" stroke-linejoin="round"/></svg>
</body></html>
